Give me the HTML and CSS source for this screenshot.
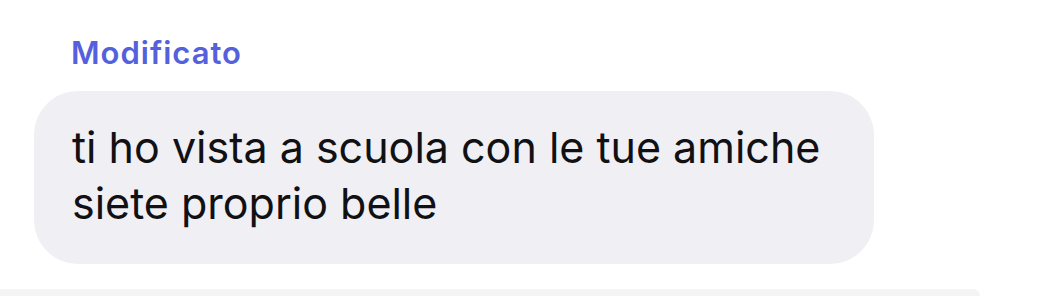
FILE: index.html
```html
<!DOCTYPE html>
<html lang="it">
<head>
    <meta charset="UTF-8">
    <meta name="viewport" content="width=device-width, initial-scale=1.0">
    <title>Messaggio</title>
    <link rel="stylesheet" href="styles.css">
</head>
<body>
    <div class="thread">
        <div class="message">
            <div class="edited">Modificato</div>
            <div class="bubble">ti ho vista a scuola con le tue amiche<br>siete proprio belle</div>
        </div>
        <div class="composer"></div>
    </div>
</body>
</html>
```

FILE: styles.css
```css
body {
    margin: 0;
    background-color: #ffffff;
    font-family: Inter, "Liberation Sans", Arial, sans-serif;
    overflow: hidden;
}
.thread {
    display: flex;
    flex-direction: column;
    padding-top: 34px;
}
.message {
    display: flex;
    flex-direction: column;
    align-items: flex-start;
}
.edited {
    margin-left: 71px;
    font-size: 31px;
    line-height: 37px;
    font-weight: 600;
    letter-spacing: 1px;
    color: #5460dc;
    margin-bottom: 20px;
}
.bubble {
    margin-left: 34px;
    width: 840px;
    box-sizing: border-box;
    padding: 28px 40px 33px 38px;
    background-color: #efeff4;
    border-radius: 44px;
    font-size: 43px;
    line-height: 56px;
    color: #111114;
}
.composer {
    margin-top: 25px;
    width: 980px;
    height: 7px;
    background-color: #f4f4f5;
    border-radius: 0 20px 0 0;
}
```
